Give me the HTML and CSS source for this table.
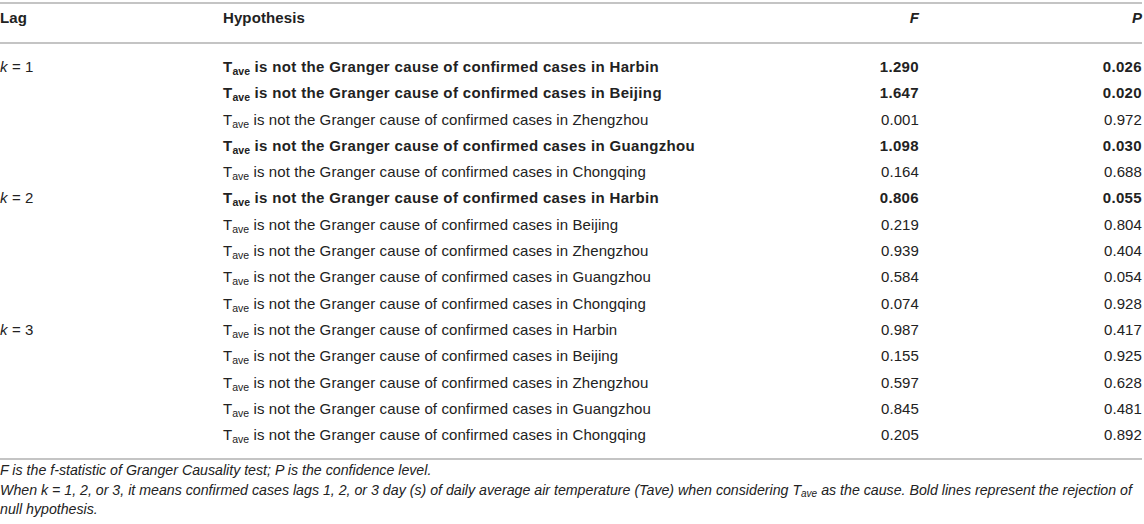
FILE: index.html
```html
<!DOCTYPE html>
<html>
<head>
<meta charset="utf-8">
<link rel="stylesheet" href="styles.css">
</head>
<body>
<div class="wrap">
<table class="tbl">
<thead>
<tr><th class="c-lag">Lag</th><th class="c-hyp">Hypothesis</th><th class="c-num c-f"><i>F</i></th><th class="c-num"><i>P</i></th></tr>
</thead>
<tbody>
<tr class="b"><td class="c-lag"><i>k</i> = 1</td><td>T<sub>ave</sub> is not the Granger cause of confirmed cases in Harbin</td><td class="c-num">1.290</td><td class="c-num">0.026</td></tr>
<tr class="b"><td class="c-lag"></td><td>T<sub>ave</sub> is not the Granger cause of confirmed cases in Beijing</td><td class="c-num">1.647</td><td class="c-num">0.020</td></tr>
<tr><td class="c-lag"></td><td>T<sub>ave</sub> is not the Granger cause of confirmed cases in Zhengzhou</td><td class="c-num">0.001</td><td class="c-num">0.972</td></tr>
<tr class="b"><td class="c-lag"></td><td>T<sub>ave</sub> is not the Granger cause of confirmed cases in Guangzhou</td><td class="c-num">1.098</td><td class="c-num">0.030</td></tr>
<tr><td class="c-lag"></td><td>T<sub>ave</sub> is not the Granger cause of confirmed cases in Chongqing</td><td class="c-num">0.164</td><td class="c-num">0.688</td></tr>
<tr class="b"><td class="c-lag"><i>k</i> = 2</td><td>T<sub>ave</sub> is not the Granger cause of confirmed cases in Harbin</td><td class="c-num">0.806</td><td class="c-num">0.055</td></tr>
<tr><td class="c-lag"></td><td>T<sub>ave</sub> is not the Granger cause of confirmed cases in Beijing</td><td class="c-num">0.219</td><td class="c-num">0.804</td></tr>
<tr><td class="c-lag"></td><td>T<sub>ave</sub> is not the Granger cause of confirmed cases in Zhengzhou</td><td class="c-num">0.939</td><td class="c-num">0.404</td></tr>
<tr><td class="c-lag"></td><td>T<sub>ave</sub> is not the Granger cause of confirmed cases in Guangzhou</td><td class="c-num">0.584</td><td class="c-num">0.054</td></tr>
<tr><td class="c-lag"></td><td>T<sub>ave</sub> is not the Granger cause of confirmed cases in Chongqing</td><td class="c-num">0.074</td><td class="c-num">0.928</td></tr>
<tr><td class="c-lag"><i>k</i> = 3</td><td>T<sub>ave</sub> is not the Granger cause of confirmed cases in Harbin</td><td class="c-num">0.987</td><td class="c-num">0.417</td></tr>
<tr><td class="c-lag"></td><td>T<sub>ave</sub> is not the Granger cause of confirmed cases in Beijing</td><td class="c-num">0.155</td><td class="c-num">0.925</td></tr>
<tr><td class="c-lag"></td><td>T<sub>ave</sub> is not the Granger cause of confirmed cases in Zhengzhou</td><td class="c-num">0.597</td><td class="c-num">0.628</td></tr>
<tr><td class="c-lag"></td><td>T<sub>ave</sub> is not the Granger cause of confirmed cases in Guangzhou</td><td class="c-num">0.845</td><td class="c-num">0.481</td></tr>
<tr><td class="c-lag"></td><td>T<sub>ave</sub> is not the Granger cause of confirmed cases in Chongqing</td><td class="c-num">0.205</td><td class="c-num">0.892</td></tr>
</tbody>
</table>
<div class="notes">
<p><i>F</i> is the f-statistic of Granger Causality test; <i>P</i> is the confidence level.</p>
<p>When k = 1, 2, or 3, it means confirmed cases lags 1, 2, or 3 day (s) of daily average air temperature (Tave) when considering T<sub>ave</sub> as the cause. Bold lines represent the rejection of null hypothesis.</p>
</div>
</div>
</body>
</html>
```
FILE: styles.css
```css
html, body {
  margin: 0;
  padding: 0;
  background: #fff;
}
body {
  font-family: "Liberation Sans", Arial, Helvetica, sans-serif;
  color: #222;
}
.wrap {
  width: 1142px;
  padding-top: 2px;
}
.tbl {
  width: 100%;
  border-collapse: collapse;
  font-size: 15px;
  letter-spacing: 0.1px;
}
.tbl thead tr {
  border-top: 2px solid #c4c4c4;
  border-bottom: 2px solid #c4c4c4;
}
.tbl tbody {
  border-bottom: 2px solid #c4c4c4;
}
.tbl th {
  font-weight: bold;
  text-align: left;
  padding: 6px 0 16px;
  line-height: 16px;
  vertical-align: top;
}
.tbl td {
  padding: 0;
  vertical-align: middle;
  line-height: 26.3px;
  white-space: nowrap;
}
.tbl tbody tr:first-child td {
  padding-top: 10px;
}
.tbl tbody tr:last-child td {
  padding-bottom: 10px;
}
.c-lag {
  width: 223px;
}
.tbl .c-num {
  text-align: right;
}
.tbl th.c-f {
  width: 170px;
}
.tbl th.c-hyp {
  width: 526px;
}
.tbl tr.b td {
  font-weight: bold;
  letter-spacing: 0.35px;
}
.tbl tr.b td.c-lag {
  font-weight: normal;
  letter-spacing: 0.1px;
}
sub {
  font-size: 10.5px;
  vertical-align: -3px;
  line-height: 0;
  letter-spacing: 0;
}
.notes {
  font-size: 14.2px;
  font-style: italic;
  padding-top: 1px;
  line-height: 19.5px;
}
.notes sub {
  font-size: 10px;
  vertical-align: -2px;
}
.notes p {
  margin: 0;
}
```
